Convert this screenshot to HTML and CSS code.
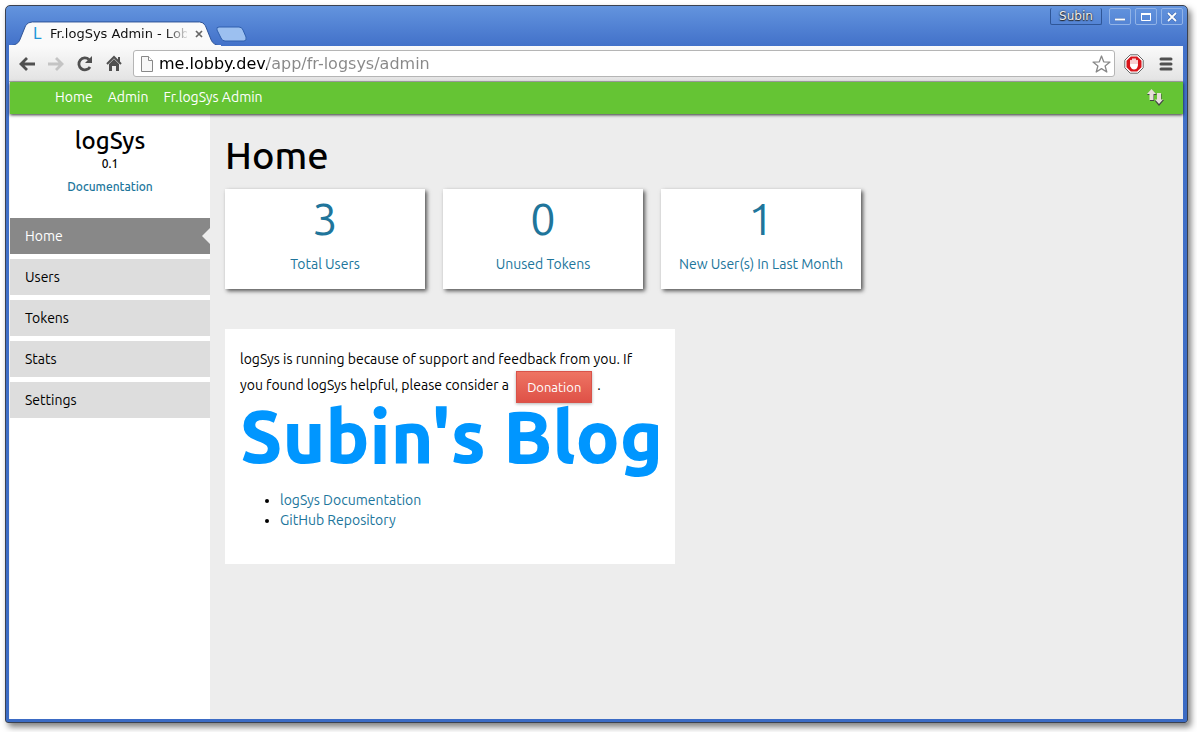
FILE: index.html
```html
<!DOCTYPE html>
<html lang="en">
<head>
<meta charset="utf-8">
<title>Fr.logSys Admin - Lobby</title>
<link rel="stylesheet" href="styles.css">
</head>
<body>
<div class="window">
  <header class="titlebar">
    <div class="tab">
      <svg class="tab-shape" viewBox="0 0 218 26" preserveAspectRatio="none" aria-hidden="true">
        <path d="M0 26 Q9 25 11 20 L17 5 Q19 1 24 1 H196 Q200 1 202 5 L208 20 Q210 25 218 26 Z" fill="#fafafa" stroke="#2c5194"/>
        <path d="M0 26H218" stroke="#fafafa" stroke-width="2"/>
      </svg>
      <span class="favicon">L</span>
      <span class="tab-title">Fr.logSys Admin - Lob</span>
      <button class="tab-close" aria-label="Close tab"><svg width="8" height="8" viewBox="0 0 8 8"><path d="M1 1L7 7M7 1L1 7" stroke="#666" stroke-width="1.700"/></svg></button>
    </div>
    <button class="new-tab" aria-label="New tab"><svg width="32" height="16" viewBox="0 0 32 16"><path d="M3 1H23Q26 1 27 4L30 11Q31 15 28 15H9Q6 15 5 12L1 4Q0 1 3 1Z" fill="#9cc0f0" stroke="#2f5fae"/></svg></button>
    <div class="controls">
      <button class="control user">Subin</button>
      <button class="control" aria-label="Minimize"><svg width="12" height="12" viewBox="0 0 12 12"><path d="M1 8.500H11" stroke="#3d66aa" stroke-width="3"/><path d="M1 8.500H11" stroke="#fff" stroke-width="2"/></svg></button>
      <button class="control" aria-label="Maximize"><svg width="12" height="12" viewBox="0 0 12 12"><path d="M1.500 2.500H10.500V9.500H1.500Z" fill="none" stroke="#fff"/><path d="M1 3H11" stroke="#fff" stroke-width="2"/></svg></button>
      <button class="control" aria-label="Close"><svg width="12" height="12" viewBox="0 0 12 12"><path d="M2 2L10 10M10 2L2 10" stroke="#3d66aa" stroke-width="3"/><path d="M2 2L10 10M10 2L2 10" stroke="#fff" stroke-width="1.800"/></svg></button>
    </div>
  </header>
  <div class="toolbar">
    <button class="tool" aria-label="Back"><svg width="18" height="18" viewBox="0 0 18 18"><path d="M17 9H4M9 3L3 9L9 15" fill="none" stroke="#505050" stroke-width="2.800"/></svg></button>
    <button class="tool" aria-label="Forward"><svg width="18" height="18" viewBox="0 0 18 18"><path d="M1 9H14M9 3L15 9L9 15" fill="none" stroke="#c4c4c4" stroke-width="2.800"/></svg></button>
    <button class="tool" aria-label="Reload"><svg width="18" height="18" viewBox="0 0 18 18"><path d="M14 12A6 6 0 1 1 13 4.500" fill="none" stroke="#505050" stroke-width="2.800"/><path d="M16 1V8H9Z" fill="#505050"/></svg></button>
    <button class="tool" aria-label="Home page"><svg width="18" height="18" viewBox="0 0 18 18"><path d="M2 9L9 2L16 9" fill="none" stroke="#505050" stroke-width="2"/><path d="M13 2H15V8L13 6ZM4 9L9 4L14 9V16H11V11H7V16H4Z" fill="#505050"/></svg></button>
    <label class="address">
      <svg width="12" height="16" viewBox="0 0 12 16" aria-hidden="true"><path d="M.500 .500H7.500L11.500 4.500V15.500H.500Z" fill="#f7f7f7" stroke="#888"/><path d="M7.500 .500V4.500H11.500" fill="#fff" stroke="#888"/></svg>
      <input class="url" type="text" aria-label="Address" value="me.lobby.dev/app/fr-logsys/admin">
      <svg width="19" height="18" viewBox="0 0 19 18" aria-hidden="true"><path d="M9.500 1L11.700 6.800L18 7.100L13.100 11L14.800 17L9.500 13.600L4.200 17L5.900 11L1 7.100L7.300 6.800Z" fill="#fff" stroke="#888" stroke-width="1.300" stroke-linejoin="round"/></svg>
    </label>
    <button class="tool" aria-label="Ad blocker"><svg width="20" height="20" viewBox="0 0 20 20"><path d="M6.200 .800H13.800L19.200 6.200V13.800L13.800 19.200H6.200L.800 13.800V6.200Z" fill="#fff" stroke="#666"/><path d="M6.800 2.500H13.200L17.500 6.800V13.200L13.200 17.500H6.800L2.500 13.200V6.800Z" fill="#d9151b"/><path d="M7 12V6.500M9 11V5M11 11V5M13 11V6.500" stroke="#fff" stroke-width="1.600" stroke-linecap="round"/><path d="M6.200 10H13.800V12Q13 15.500 10 15.500Q7.500 15.500 6.200 12Z" fill="#fff"/></svg></button>
    <button class="tool" aria-label="Menu"><svg width="14" height="14" viewBox="0 0 14 14"><path d="M2 2H12M2 7H12M2 12H12" stroke="#505050" stroke-width="3" stroke-linecap="round"/></svg></button>
  </div>
  <div class="page">
    <nav class="topnav">
      <a href="#">Home</a>
      <a href="#">Admin</a>
      <a href="#">Fr.logSys Admin</a>
      <a class="updates" href="#" aria-label="Updates"><svg width="18" height="18" viewBox="0 0 18 18"><path d="M5.500 2L11 7H8V13H4V7H1Z" fill="#444"/><path d="M5.500 1L10 6H7.500V12H3.500V6H1Z" fill="#e6dfdc"/><path d="M11 6H15.500V12H18L13 18L8.500 12.500H11Z" fill="#444"/><path d="M11 5H15V11.500H17L13 16L9 11.500H11Z" fill="#e6dfdc"/></svg></a>
    </nav>
    <div class="columns">
      <aside class="sidebar">
        <div class="brand">
          <h2>logSys</h2>
          <span class="version">0.1</span>
          <a href="#">Documentation</a>
        </div>
        <nav class="menu">
          <a class="active" href="#">Home</a>
          <a href="#">Users</a>
          <a href="#">Tokens</a>
          <a href="#">Stats</a>
          <a href="#">Settings</a>
        </nav>
      </aside>
      <main class="content">
        <h1>Home</h1>
        <div class="cards">
          <a class="card" href="#"><span class="count">3</span><span>Total Users</span></a>
          <a class="card" href="#"><span class="count">0</span><span>Unused Tokens</span></a>
          <a class="card" href="#"><span class="count">1</span><span>New User(s) In Last Month</span></a>
        </div>
        <section class="panel">
          <p>logSys is running because of support and feedback from you. If<br>you found logSys helpful, please consider a <button class="donate">Donation</button>.</p>
          <a class="blog" href="#">Subin's Blog</a>
          <ul>
            <li><a href="#">logSys Documentation</a></li>
            <li><a href="#">GitHub Repository</a></li>
          </ul>
        </section>
      </main>
    </div>
  </div>
</div>
</body>
</html>
```
FILE: styles.css
```css
* { box-sizing: border-box; }
body {
  margin: 0;
  padding: 5px 9px 9px 5px;
  min-height: 100vh;
  display: flex;
  background: #fff;
  color: #000;
  font: 430 14px/20px "Ubuntu", "Noto Sans", sans-serif;
}
a { color: #20759b; text-decoration: none; }
button { margin: 0; padding: 0; border: 0; background: none; font: inherit; }
svg { display: block; flex: none; }

.window {
  flex: 1;
  display: flex;
  flex-direction: column;
  padding: 0 4px 3px 3px;
  border: 1px solid #3a4150;
  border-radius: 5px 5px 3px 3px;
  background: linear-gradient(#6394de, #4271c9 40px, #3b6bc4);
  box-shadow: 3px 4px 6px rgba(0, 0, 0, .5);
}
.titlebar { height: 40px; display: flex; align-items: flex-end; }
.tab {
  position: relative;
  width: 212px;
  height: 25px;
  display: flex;
  align-items: center;
  padding-left: 24px;
  font: 13px/20px "DejaVu Sans", sans-serif;
}
.tab-shape { position: absolute; inset: 0; width: 100%; height: 100%; }
.favicon, .tab-title, .tab-close { position: relative; }
.favicon { width: 17px; color: #2196d8; font-size: 15px; }
.tab-title {
  width: 137px;
  white-space: nowrap;
  background: linear-gradient(90deg, #111 115px, #ddd 137px);
  background-clip: text;
  -webkit-text-fill-color: transparent;
}
.tab-close { margin-left: 8px; }
.new-tab { margin: 0 0 4px -5px; }
.controls { align-self: flex-start; display: flex; gap: 4px; margin: 2px 0 0 auto; }
.control {
  width: 22px;
  height: 17px;
  display: grid;
  place-items: center;
  border: 1px solid #91b3e7;
  border-radius: 2px;
}
.control.user {
  width: 52px;
  margin-right: 3px;
  border-color: #2f5697;
  border-top: 0;
  color: #eee;
  font: 12px/16px "DejaVu Sans", sans-serif;
  text-shadow: 0 0 2px #222, 0 1px 1px #222;
}

.toolbar {
  height: 36px;
  display: flex;
  align-items: center;
  padding: 0 9px 0 3px;
  background: linear-gradient(#fafafa, #e3e3e3);
  border-bottom: 1px solid #b0b0b0;
}
.tool { width: 29px; height: 28px; display: grid; place-items: center; }
.address {
  flex: 1;
  height: 27px;
  display: flex;
  align-items: center;
  gap: 6px;
  margin: 0 4px 0 5px;
  padding: 0 3px 0 7px;
  background: #fff;
  border: 1px solid #b5b5b5;
  border-radius: 3px;
}
.url {
  flex: 1;
  min-width: 0;
  padding: 0;
  border: 0;
  font: 16px/22px "DejaVu Sans", sans-serif;
  background: linear-gradient(90deg, #000 108px, #888 108px);
  background-clip: text;
  -webkit-text-fill-color: transparent;
}
.toolbar .tool:last-child { margin-left: 3px; margin-right: -6px; }

.page { flex: 1; display: flex; flex-direction: column; background: #ededed; border-left: 1px solid #f4f4f4; }
.topnav {
  position: relative;
  z-index: 1;
  height: 32px;
  display: flex;
  align-items: center;
  gap: 15px;
  padding: 0 19px 2px 45px;
  background: #65c434;
  box-shadow: 0 1px 3px rgba(0, 0, 0, .8);
}
.topnav a { color: #fff; }
.updates { margin-left: auto; }
.columns { flex: 1; display: flex; }
.sidebar { width: 200px; flex: none; background: #fff; }
.brand { height: 104px; padding-top: 11px; display: flex; flex-direction: column; align-items: center; font-size: 12px; font-weight: 500; }
.brand h2 { margin: 0; font-size: 24px; line-height: 32px; font-weight: 540; }
.version { line-height: 14px; margin-bottom: 6px; font-weight: 540; }
.menu { display: flex; flex-direction: column; gap: 5px; }
.menu a { height: 36px; padding: 8px 15px; background: #ddd; color: #000; }
.menu .active { position: relative; background: #888; color: #fff; }
.menu .active::after {
  content: "";
  position: absolute;
  right: 0;
  top: 10px;
  border: solid transparent;
  border-width: 8px 8px 8px 0;
  border-right-color: #ededed;
}
.content { flex: 1; padding: 17px 15px; }
h1 { margin: 0 0 10px; font-size: 38px; line-height: 48px; font-weight: 540; }
.cards { display: flex; gap: 18px; margin-bottom: 40px; }
.card {
  width: 200px;
  height: 100px;
  display: flex;
  flex-direction: column;
  align-items: center;
  padding-top: 8px;
  gap: 13px;
  background: #fff;
  box-shadow: 2px 2px 4px rgba(0, 0, 0, .65);
}
.count { font-size: 45px; line-height: 44px; }
.panel { width: 450px; padding: 18px 15px 34px; background: #fff; }
.panel p { margin: 0; line-height: 24px; white-space: nowrap; }
.donate {
  height: 32px;
  margin: 0 5px 0 4px;
  padding: 0 10px;
  border: 1px solid #d9534a;
  background: linear-gradient(#ee7463, #df5147);
  box-shadow: 0 1px 3px rgba(0, 0, 0, .3);
  color: #fff;
  font-size: 13px;
  vertical-align: -2px;
}
.blog { display: block; color: #0096ff; font-size: 73px; line-height: 66px; font-weight: 800; white-space: nowrap; }
.panel ul { margin: 21px 0 0; padding-left: 40px; }
```
